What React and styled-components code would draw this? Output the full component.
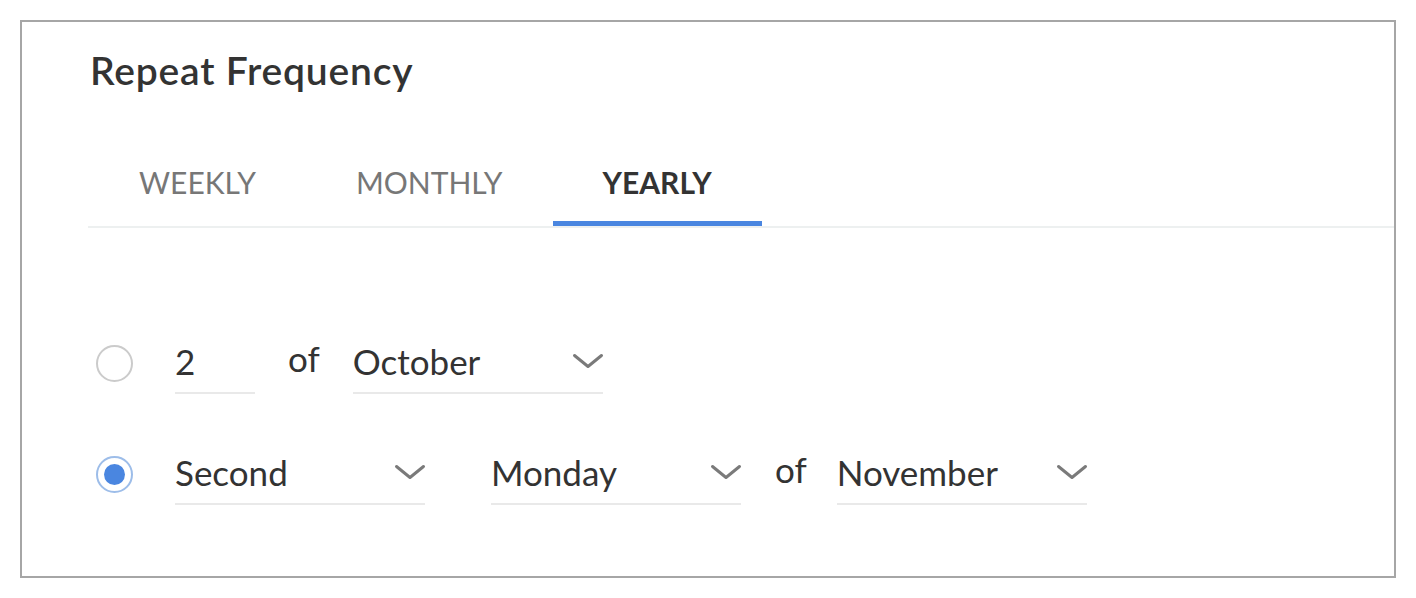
import React from "react";
import styled, { createGlobalStyle } from "styled-components";

const Global = createGlobalStyle`
  html, body { margin: 0; padding: 0; background: #fff; }
  body { font-family: Lato, "Open Sans", sans-serif; color: #333; }
`;

const Page = styled.div`
  padding: 20px;
`;

const Card = styled.section`
  box-sizing: border-box;
  width: 1376px;
  height: 558px;
  border: 2px solid #a6a6a6;
  background: #fff;
  padding: 25px 0 0 68px;
`;

const Title = styled.h2`
  margin: 0;
  font-size: 39px;
  line-height: 46px;
  font-weight: 600;
  color: #333;
  letter-spacing: 0.8px;
`;

const TabList = styled.div`
  display: flex;
  margin: 74px 0 0 -2px;
  padding-left: 1px;
  border-bottom: 2px solid #edf0f0;
`;

const Tab = styled.div`
  padding: 0 50px 24px;
  font-size: 30px;
  line-height: 30px;
  font-weight: ${(p) => (p.$active ? 700 : 400)};
  color: ${(p) => (p.$active ? "#333" : "#777")};
  border-bottom: 5px solid ${(p) => (p.$active ? "#4a86e0" : "transparent")};
`;

const Rows = styled.div`
  display: flex;
  flex-direction: column;
  gap: 58px;
  padding: 113px 0 0 6px;
`;

const Row = styled.div`
  display: flex;
  align-items: flex-start;
`;

const Radio = styled.span`
  box-sizing: border-box;
  width: 37px;
  height: 37px;
  margin: 4px 42px 0 0;
  border-radius: 50%;
  border: 2px solid ${(p) => (p.$checked ? "#9dbde9" : "#cbcbcb")};
  display: flex;
  align-items: center;
  justify-content: center;
  flex: none;
  &::after {
    content: "";
    width: 21px;
    height: 21px;
    border-radius: 50%;
    background: ${(p) => (p.$checked ? "#4a86e0" : "transparent")};
  }
`;

const Field = styled.div`
  box-sizing: border-box;
  width: ${(p) => p.$w}px;
  display: flex;
  align-items: center;
  justify-content: space-between;
  font-size: 35px;
  line-height: 40px;
  color: #333;
  padding-bottom: 11px;
  border-bottom: 2px solid #e9e9e9;
  margin-right: ${(p) => p.$mr || 0}px;
  flex: none;
`;

const Of = styled.span`
  font-size: 35px;
  line-height: 40px;
  color: #333;
  margin: -3px ${(p) => p.$mr}px 0 ${(p) => p.$ml}px;
`;

const Chevron = () => (
  <svg width="32" height="16" viewBox="0 0 32 16" style={{ marginRight: -1 }}>
    <path d="M2.5 2.5 L16 13.5 L29.5 2.5" fill="none" stroke="#7a7a7a" strokeWidth="3" strokeLinecap="round" strokeLinejoin="round" />
  </svg>
);

const Select = ({ value, w, mr }) => (
  <Field $w={w} $mr={mr}>
    <span>{value}</span>
    <Chevron />
  </Field>
);

export default function App() {
  return (
    <>
      <Global />
      <Page>
        <Card>
          <Title>Repeat Frequency</Title>
          <TabList>
            <Tab>WEEKLY</Tab>
            <Tab>MONTHLY</Tab>
            <Tab $active>YEARLY</Tab>
          </TabList>
          <Rows>
            <Row>
              <Radio />
              <Field $w={80}>2</Field>
              <Of $ml={33} $mr={33}>of</Of>
              <Select value="October" w={250} />
            </Row>
            <Row>
              <Radio $checked />
              <Select value="Second" w={250} mr={66} />
              <Select value="Monday" w={250} />
              <Of $ml={34} $mr={30}>of</Of>
              <Select value="November" w={250} />
            </Row>
          </Rows>
        </Card>
      </Page>
    </>
  );
}
